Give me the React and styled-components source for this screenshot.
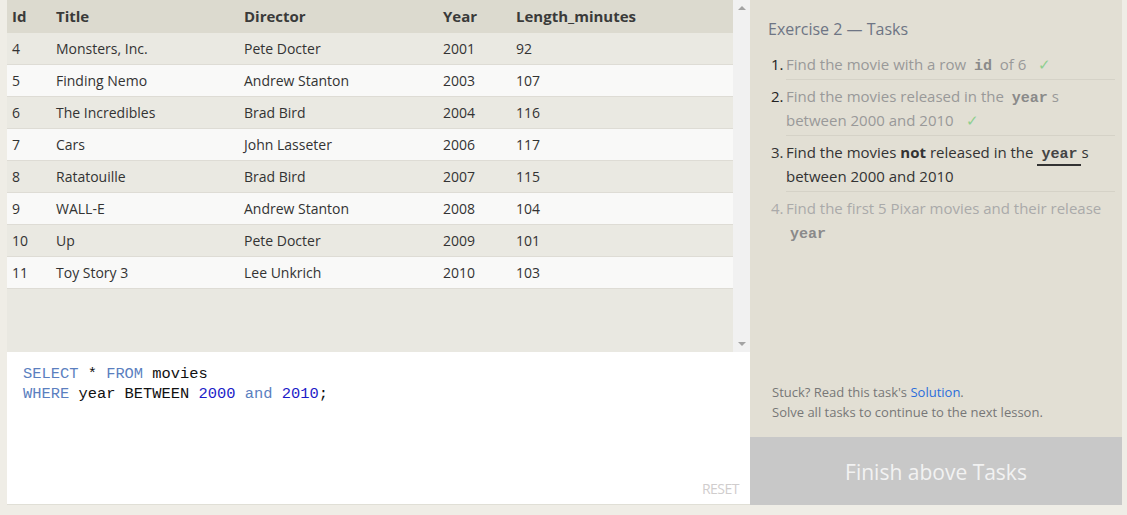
import styled, { createGlobalStyle } from 'styled-components';

const GlobalStyle = createGlobalStyle`
  html, body {
    margin: 0;
    padding: 0;
    background: #efede6;
  }
  body {
    font-family: 'Open Sans', 'Noto Sans', sans-serif;
    color: #333;
  }
`;

const movies = [
  { id: 4, title: 'Monsters, Inc.', director: 'Pete Docter', year: 2001, length: 92 },
  { id: 5, title: 'Finding Nemo', director: 'Andrew Stanton', year: 2003, length: 107 },
  { id: 6, title: 'The Incredibles', director: 'Brad Bird', year: 2004, length: 116 },
  { id: 7, title: 'Cars', director: 'John Lasseter', year: 2006, length: 117 },
  { id: 8, title: 'Ratatouille', director: 'Brad Bird', year: 2007, length: 115 },
  { id: 9, title: 'WALL-E', director: 'Andrew Stanton', year: 2008, length: 104 },
  { id: 10, title: 'Up', director: 'Pete Docter', year: 2009, length: 101 },
  { id: 11, title: 'Toy Story 3', director: 'Lee Unkrich', year: 2010, length: 103 },
];

const columns = ['Id', 'Title', 'Director', 'Year', 'Length_minutes'];

const App = () => {
  return (
    <>
      <GlobalStyle />
      <Page>
        <LeftColumn>
          <ResultsArea>
            <TablePane>
              <Table>
                <colgroup>
                  <col style={{ width: 44 }} />
                  <col style={{ width: 188 }} />
                  <col style={{ width: 199 }} />
                  <col style={{ width: 73 }} />
                  <col />
                </colgroup>
                <thead>
                  <tr>
                    {columns.map((c) => (
                      <Th key={c}>{c}</Th>
                    ))}
                  </tr>
                </thead>
                <tbody>
                  {movies.map((m, i) => (
                    <Row key={m.id} $light={i % 2 === 1}>
                      <Td>{m.id}</Td>
                      <Td>{m.title}</Td>
                      <Td>{m.director}</Td>
                      <Td>{m.year}</Td>
                      <Td>{m.length}</Td>
                    </Row>
                  ))}
                </tbody>
              </Table>
            </TablePane>
            <ScrollTrack>
              <Arrow $up />
              <Arrow />
            </ScrollTrack>
          </ResultsArea>
          <Editor>
            <Code>
              <Kw>SELECT</Kw> * <Kw>FROM</Kw> movies
              {'\n'}
              <Kw>WHERE</Kw> year BETWEEN <Num>2000</Num> <Kw>and</Kw> <Num>2010</Num>;
            </Code>
            <EditorFooter>
              <ResetButton>RESET</ResetButton>
            </EditorFooter>
          </Editor>
        </LeftColumn>

        <TaskPanel>
          <TaskContent>
            <PanelTitle>Exercise 2 — Tasks</PanelTitle>
            <TaskList>
              <Task $state="done">
                <TaskNum>1.</TaskNum>
                <TaskBody>
                  Find the movie with a row <InlineCode>id</InlineCode> of 6
                  <Check>✓</Check>
                </TaskBody>
              </Task>
              <Task $state="done">
                <TaskNum>2.</TaskNum>
                <TaskBody>
                  Find the movies released in the <InlineCode>year</InlineCode>s between 2000 and 2010
                  <Check>✓</Check>
                </TaskBody>
              </Task>
              <Task $state="active">
                <TaskNum>3.</TaskNum>
                <TaskBody>
                  Find the movies <b>not</b> released in the <InlineCode $active>year</InlineCode>s
                  between 2000 and 2010
                </TaskBody>
              </Task>
              <Task $state="todo">
                <TaskNum>4.</TaskNum>
                <TaskBody $last>
                  Find the first 5 Pixar movies and their release <InlineCode>year</InlineCode>
                </TaskBody>
              </Task>
            </TaskList>
          </TaskContent>
          <Hint>
            Stuck? Read this task's <HintLink href="#">Solution</HintLink>.
            <br />
            Solve all tasks to continue to the next lesson.
          </Hint>
          <FinishButton>Finish above Tasks</FinishButton>
        </TaskPanel>
      </Page>
    </>
  );
};

const Page = styled.div`
  display: flex;
  height: 505px;
  padding: 0 5px 10px 7px;
`;

const LeftColumn = styled.div`
  width: 743px;
  display: flex;
  flex-direction: column;
`;

const ResultsArea = styled.div`
  height: 352px;
  display: flex;
  background: #e9e8e1;
`;

const TablePane = styled.div`
  flex: 1;
`;

const Table = styled.table`
  width: 100%;
  border-collapse: collapse;
  table-layout: fixed;
  font-size: 14px;
`;

const Th = styled.th`
  height: 32px;
  padding: 0 0 0 5px;
  text-align: left;
  font-size: 15px;
  font-weight: 700;
  color: #3a3a3a;
  background: #dcdacf;
  border-bottom: 1px solid #dcdacf;
`;

const Row = styled.tr`
  background: ${(p) => (p.$light ? '#f9f9f8' : '#eae9e2')};
  border-bottom: 1px solid #dedcd5;
`;

const Td = styled.td`
  height: 31px;
  padding: 0 0 0 5px;
  color: #333;
  white-space: nowrap;
`;

const ScrollTrack = styled.div`
  width: 17px;
  background: #f1f1f1;
  display: flex;
  flex-direction: column;
  justify-content: space-between;
  align-items: center;
  padding: 6px 0;
`;

const Arrow = styled.div`
  width: 0;
  height: 0;
  border-left: 4px solid transparent;
  border-right: 4px solid transparent;
  ${(p) =>
    p.$up
      ? 'border-bottom: 4px solid #a3a3a3;'
      : 'border-top: 4px solid #a3a3a3;'}
`;

const Editor = styled.div`
  flex: 1;
  background: #fff;
  border-bottom: 1px solid #e0dfd6;
  display: flex;
  flex-direction: column;
  justify-content: space-between;
  padding: 12px 11px 6px 16px;
`;

const Code = styled.pre`
  margin: 0;
  font-family: 'Liberation Mono', 'DejaVu Sans Mono', monospace;
  font-size: 15.4px;
  line-height: 20px;
  color: #111;
`;

const Kw = styled.span`
  color: #5b7fbf;
`;

const Num = styled.span`
  color: #1c1cc8;
`;

const EditorFooter = styled.div`
  display: flex;
  justify-content: flex-end;
`;

const ResetButton = styled.span`
  font-size: 14px;
  color: #d0cdcd;
  letter-spacing: -0.5px;
`;

const TaskPanel = styled.div`
  width: 372px;
  background: #e2dfd4;
  display: flex;
  flex-direction: column;
`;

const TaskContent = styled.div`
  flex: 1;
  padding: 17px 7px 0 18px;
`;

const PanelTitle = styled.div`
  font-size: 16px;
  line-height: 24px;
  color: #6e7584;
  margin-bottom: 7px;
`;

const TaskList = styled.div`
  display: flex;
  flex-direction: column;
  padding-left: 3px;
  font-size: 15px;
  line-height: 24px;
`;

const taskColors = {
  done: { num: '#222', text: '#999' },
  active: { num: '#333', text: '#333' },
  todo: { num: '#aaa', text: '#aaa' },
};

const Task = styled.div`
  display: flex;
  color: ${(p) => taskColors[p.$state].text};
  & > span:first-child {
    color: ${(p) => taskColors[p.$state].num};
  }
`;

const TaskNum = styled.span`
  width: 15px;
  flex-shrink: 0;
  padding-top: 4px;
`;

const TaskBody = styled.div`
  flex: 1;
  padding: 4px 0 3px;
  border-bottom: ${(p) => (p.$last ? 'none' : '1px solid #d5d2c7')};
`;

const InlineCode = styled.code`
  font-family: 'Liberation Mono', 'DejaVu Sans Mono', monospace;
  font-weight: 700;
  font-size: 15px;
  line-height: 1;
  padding: 0 4px 1px;
  color: ${(p) => (p.$active ? '#444' : '#8a8a8a')};
  ${(p) => p.$active && 'border-bottom: 2px solid #333;'}
`;

const Check = styled.span`
  color: #8fcf8f;
  margin-left: 12px;
`;

const Hint = styled.div`
  padding: 0 18px 15px 22px;
  font-size: 13px;
  line-height: 20px;
  color: #777;
`;

const HintLink = styled.a`
  color: #2a6ddb;
  text-decoration: none;
`;

const FinishButton = styled.div`
  box-sizing: border-box;
  height: 68px;
  background: #c8c8c8;
  color: #f2f2f2;
  font-size: 21px;
  padding-top: 2px;
  display: flex;
  align-items: center;
  justify-content: center;
`;

export default App;
